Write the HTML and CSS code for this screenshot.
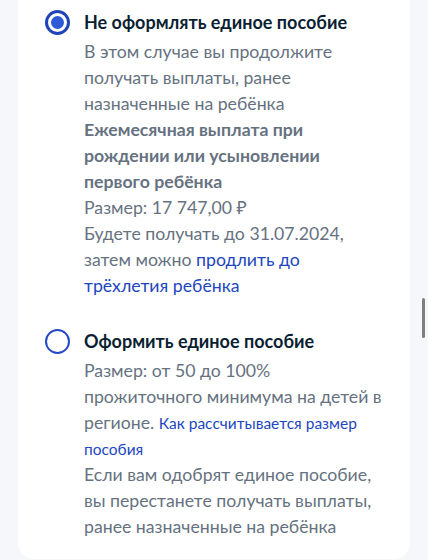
FILE: index.html
```html
<!DOCTYPE html>
<html lang="ru">
<head>
<meta charset="utf-8">
<link rel="stylesheet" href="styles.css">
</head>
<body>
<div class="page">
  <div class="card">
    <div class="option">
      <span class="radio radio-checked"><span class="dot"></span></span>
      <div class="content">
        <div class="title">Не оформлять единое пособие</div>
        <div class="desc">
          <p>В этом случае вы продолжите получать выплаты, ранее назначенные на ребёнка</p>
          <p class="strong">Ежемесячная выплата при рождении или усыновлении первого ребёнка</p>
          <p>Размер: 17&nbsp;747,00&nbsp;₽</p>
          <p>Будете получать до 31.07.2024, затем можно <a class="link" href="#">продлить до трёхлетия ребёнка</a></p>
        </div>
      </div>
    </div>
    <div class="option option-second">
      <span class="radio"></span>
      <div class="content">
        <div class="title">Оформить единое пособие</div>
        <div class="desc">
          <p>Размер: от 50 до 100% прожиточного минимума на детей в регионе. <a class="link link-small" href="#">Как рассчитывается размер пособия</a></p>
          <p>Если вам одобрят единое пособие, вы перестанете получать выплаты, ранее назначенные на ребёнка</p>
        </div>
      </div>
    </div>
  </div>
  <div class="scrollbar"></div>
</div>
</body>
</html>
```
FILE: styles.css
```css
html, body {
  margin: 0;
  padding: 0;
}
body {
  background: #f5f7fb;
  font-family: Lato, "Noto Sans", sans-serif;
  -webkit-font-smoothing: antialiased;
}
.page {
  height: 560px;
  overflow: hidden;
}
.card {
  box-sizing: border-box;
  height: 559px;
  margin: 0 18px;
  background: #ffffff;
  border-radius: 0 0 16px 16px;
  padding: 10px 28px 0 27px;
}
.option {
  display: flex;
  align-items: flex-start;
  gap: 14px;
}
.option-second {
  margin-top: 30px;
}
.radio {
  box-sizing: border-box;
  flex: 0 0 25px;
  width: 25px;
  height: 25px;
  border: 2.5px solid #2549c8;
  border-radius: 50%;
  display: flex;
  align-items: center;
  justify-content: center;
}
.radio-checked {
  border-width: 3px;
  border-color: #1f43b8;
}
.dot {
  width: 13px;
  height: 13px;
  border-radius: 50%;
  background: #2f5ad6;
}
.content {
  flex: 1;
  min-width: 0;
}
.title {
  font-size: 18px;
  font-weight: 700;
  line-height: 24px;
  color: #0b1f33;
}
.desc {
  margin-top: 5px;
  font-size: 17.7px;
  line-height: 26px;
  color: #66727f;
}
.desc p {
  margin: 0;
}
.strong {
  font-weight: 700;
}
.link {
  color: #1d47c0;
  text-decoration: none;
}
.link-small {
  font-size: 15.5px;
}
.scrollbar {
  position: fixed;
  left: 422px;
  top: 298px;
  width: 3px;
  height: 40px;
  border-radius: 2px;
  background: #7f7f7f;
}
```
